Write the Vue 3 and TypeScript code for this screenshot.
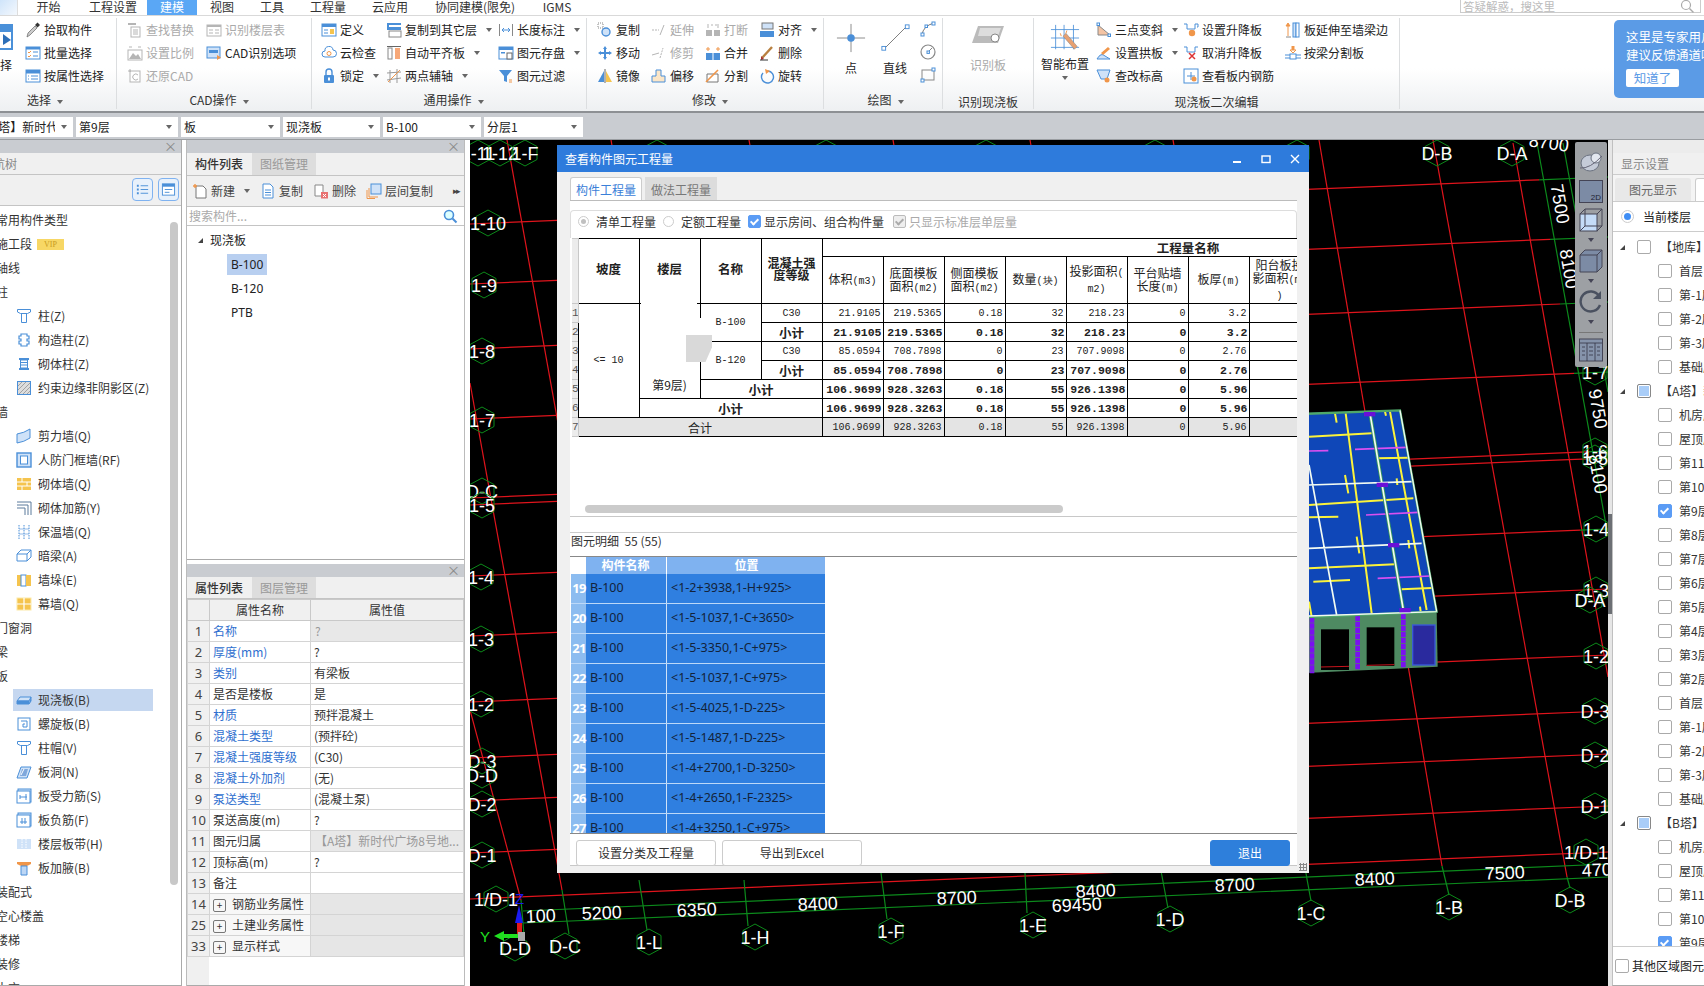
<template>
  <div class="app">
    <div class="topbar">
      <div class="logo"></div>
      <span v-for="t in tabs" :key="t.label" class="tab" :class="{ on: t.on }" :style="{ width: t.w + 'px' }">{{ t.label }}</span>
      <div class="ask">答疑解惑，搜这里<svg class="ic ask-ic" viewBox="0 0 16 16" v-html="icons.search"></svg></div>
    </div>

    <div class="ribbon">
      <div v-for="g in groups" :key="g.title" class="group" :style="{ width: g.w + 'px', paddingLeft: g.pad + 'px' }">
        <div class="g-body">
          <div v-if="g.title === '选择'" class="big-left">
            <svg viewBox="0 0 16 28" width="16" height="28"><rect x="-8" y="1" width="21" height="26" fill="#4a90d9"/><rect x="-6" y="9" width="17" height="16" fill="#fff"/><path d="M3 11v11l8-5z" fill="#2d6fb8"/></svg>
            <span>选择</span>
          </div>
          <div v-if="g.title === '绘图'" class="draw">
            <div class="big" style="width: 44px">
              <svg viewBox="0 0 32 32" width="32" height="30"><path d="M16 1v30M1 16h30" stroke="#888"/><circle cx="16" cy="16" r="4" fill="#4a8fd8"/></svg>
              <span>点</span>
            </div>
            <div class="big" style="width: 44px">
              <svg viewBox="0 0 32 32" width="32" height="30"><path d="M5 27L28 4" stroke="#777"/><rect x="2" y="25" width="4" height="4" fill="#fff" stroke="#4a8fd8"/><rect x="27" y="2" width="4" height="4" fill="#fff" stroke="#4a8fd8"/></svg>
              <span>直线</span>
            </div>
            <div class="draw-col">
              <svg class="ic" viewBox="0 0 16 16" v-html="icons.arc"></svg>
              <svg class="ic" viewBox="0 0 16 16" v-html="icons.circle"></svg>
              <svg class="ic" viewBox="0 0 16 16" v-html="icons.rect"></svg>
            </div>
          </div>
          <div v-if="g.title === '识别现浇板'" class="big off" style="width: 60px">
            <svg viewBox="0 0 36 28" width="36" height="28"><path d="M8 3h26l-6 17H2z" fill="#bbb"/><path d="M10 5h21l-3 8H8z" fill="#ddd"/><circle cx="25" cy="15" r="4" fill="#fff" stroke="#888"/></svg>
            <span>识别板</span>
          </div>
          <div v-if="g.title === '现浇板二次编辑'" class="big smart" style="width: 58px">
            <svg viewBox="0 0 32 32" width="32" height="30"><path d="M6 2v26M15 2v26M25 2v26M1 7h30M1 16h30M1 26h30" stroke="#4a8fd8" stroke-width=".9"/><path d="M14 14l3-3 12 14-3 3z" fill="#e8a070" stroke="#888" stroke-width=".6"/><path d="M11 11l1 3M18 8l-1 3" stroke="#f0964a"/></svg>
            <span>智能布置</span>
            <i class="arr"></i>
          </div>
          <div v-for="(c, ci) in g.cols" :key="ci" class="g-col" :style="{ width: c.w + 'px' }">
            <div v-for="it in c.items" :key="it.t" class="r-item" :class="{ off: it.off }">
              <svg class="ic" viewBox="0 0 16 16" v-html="icons[it.i]"></svg>
              <span>{{ it.t }}</span>
              <i v-if="it.a" class="arr"></i>
            </div>
          </div>
        </div>
        <div class="g-title" :class="{ low: !g.more, left: g.title === '选择' }">{{ g.title }}<i v-if="g.more" class="arr"></i></div>
      </div>
      <div class="notice">
        <p>这里是专家用户</p>
        <p>建议反馈通道哦</p>
        <b>知道了</b>
      </div>
    </div>

    <div class="combos">
      <div v-for="c in combos" :key="c.t" class="combo" :style="{ width: c.w + 'px' }">
        <span>{{ c.t }}</span><i class="arr"></i>
      </div>
    </div>

    <div class="main">
      <aside class="nav">
        <div class="head-bar"><span class="x">×</span></div>
        <div class="nav-title">导航树</div>
        <div class="nav-tools">
          <span class="view-btn"><svg viewBox="0 0 16 16" v-html="icons.viewList"></svg></span>
          <span class="view-btn"><svg viewBox="0 0 16 16" v-html="icons.viewCard"></svg></span>
        </div>
        <div class="nav-tree">
          <div v-for="n in navRows" :key="n.t" class="n-row" :class="{ sub: n.i, sel: n.sel }">
            <svg v-if="n.i" class="ic" viewBox="0 0 16 16" v-html="icons[n.i]"></svg>
            <span>{{ n.t }}</span>
            <em v-if="n.vip">VIP</em>
          </div>
          <div class="nav-scroll"></div>
        </div>
      </aside>

      <section class="mid">
        <div class="mid-top">
          <div class="head-bar"><span class="x">×</span></div>
          <div class="p-tabs"><span class="on">构件列表</span><span>图纸管理</span></div>
          <div class="mid-tools">
            <span v-for="t in midTools" :key="t.t" class="m-tool">
              <svg class="ic" viewBox="0 0 16 16" v-html="icons[t.i]"></svg>{{ t.t }}<i v-if="t.a" class="arr"></i>
            </span>
            <span class="more">▸▸</span>
          </div>
          <div class="m-search">搜索构件...<svg class="ic" viewBox="0 0 16 16" v-html="icons.searchBlue"></svg></div>
          <div class="m-tree">
            <div class="m-root"><i class="tri"></i>现浇板</div>
            <div class="m-leaf"><span class="sel">B-100</span></div>
            <div class="m-leaf"><span>B-120</span></div>
            <div class="m-leaf"><span>PTB</span></div>
          </div>
        </div>
        <div class="mid-bottom">
          <div class="head-bar"><span class="x">×</span></div>
          <div class="p-tabs"><span class="on">属性列表</span><span>图层管理</span></div>
          <table class="props">
            <colgroup><col style="width: 22px" /><col style="width: 101px" /><col style="width: 153px" /></colgroup>
            <thead>
              <tr><th></th><th>属性名称</th><th>属性值</th></tr>
            </thead>
            <tbody>
              <tr v-for="p in props" :key="p.n" :class="{ fold: p.plus }">
                <td class="idx">{{ p.n }}</td>
                <td class="pname" :class="{ link: p.link }"><i v-if="p.plus" class="plus">+</i>{{ p.name }}</td>
                <td class="pval" :class="{ dim: p.dim }">{{ p.val }}</td>
              </tr>
            </tbody>
          </table>
          <div class="props-rest"><span></span></div>
        </div>
      </section>

      <div class="canvas">
        <svg class="cad" viewBox="470 140 1138 846" width="1138" height="846">
          <g fill="none" stroke-width="1.2">
            <line v-for="(l, i) in redLines" :key="'r' + i" :x1="l[0]" :y1="l[1]" :x2="l[2]" :y2="l[3]" stroke="#e0141c" />
            <line v-for="(l, i) in greenLines" :key="'g' + i" :x1="l[0]" :y1="l[1]" :x2="l[2]" :y2="l[3]" stroke="#0c8a1c" />
          </g>
          <g v-for="h in hexes" :key="h.t + h.x" :transform="`translate(${h.x} ${h.y})`">
            <polygon points="0,-13 12,-6.5 12,6.5 0,13 -12,6.5 -12,-6.5" fill="none" stroke="#0c8a1a" />
            <text class="lbl" text-anchor="middle" y="6.5">{{ h.t }}</text>
          </g>
          <text v-for="d in dims" :key="d.t + d.x" class="lbl" text-anchor="middle" :transform="`translate(${d.x} ${d.y}) rotate(${d.r})`">{{ d.t }}</text>

          <g transform="translate(1200 380) scale(.33333)">
            <polygon points="300,100 600,90 710,695 300,712" fill="#0f47b8" />
            <polygon points="300,712 710,695 713,860 300,880" fill="#4e8a62" />
            <rect x="363" y="748" width="84" height="122" fill="#000" />
            <rect x="500" y="742" width="83" height="116" fill="#000" />
            <path d="M363 861l84-2M500 856l83-2" stroke="#c8141c" stroke-width="3" />
            <rect x="638" y="735" width="67" height="120" fill="#2a2a9e" stroke="#3a5ad8" stroke-width="4" />
            <path d="M336 712v168M473 708v160M610 702v160" stroke="#7a10f0" stroke-width="14" stroke-dasharray="16 2" />
            <g fill="none" stroke="#fbf33a" stroke-width="6">
              <path d="M327 170l188-10M327 375l313-20M327 565l258-12M530 235l95-2M605 628l90-4M340 605l110-5M327 412l88-2" />
              <path d="M437 100l78 600M570 95l110 595M405 100l5 28M555 95l3 12M435 285l10 55M590 295l2 20M470 470l8 50M625 480l3 25M660 680l2 15M327 665l8 45" />
            </g>
            <g fill="none" stroke="#d94ff0" stroke-width="5">
              <path d="M327 213l58-1M465 208l155-6M498 405l157-8M533 595l157-7" />
            </g>
            <g fill="none" stroke="#3a9a5a" stroke-width="10">
              <path d="M510 100l100 590" />
            </g>
            <g fill="none" stroke="#f2fbf2" stroke-width="5">
              <path d="M327 255l83 450M510 100l100 590M327 315l308-10M327 505l338-15" />
            </g>
            <path d="M300 102l300-11 110 604-410 17" fill="none" stroke="#4fa86a" stroke-width="7" />
            <path d="M600 91l110 604M327 708l383-13" fill="none" stroke="#f2fbf2" stroke-width="4" />
            <g fill="#6a10d8">
              <rect x="492" y="96" width="34" height="13" /><rect x="530" y="308" width="34" height="13" />
              <rect x="564" y="489" width="34" height="13" /><rect x="598" y="684" width="34" height="13" />
            </g>
          </g>

          <path d="M519 905l-4 18h8z" fill="#1a1af0" />
          <path d="M519 920v12" stroke="#1a1af0" stroke-width="3" />
          <rect x="517" y="923" width="5" height="12" fill="#e01818" />
          <rect x="518" y="932" width="7" height="9" fill="#aaa" />
          <path d="M518 936h-14" stroke="#20e020" stroke-width="4" />
          <path d="M494 936l10-5v10z" fill="#20e020" />
          <text x="480" y="942" class="ax" fill="#20e020">Y</text>
          <text x="515" y="904" class="ax" fill="#1a1af0">Z</text>
        </svg>

        <div class="tools3d">
          <svg viewBox="0 0 24 22" width="26" height="22"><ellipse cx="11" cy="12" rx="9" ry="8" fill="#c5cbd8" stroke="#6b7280" /><circle cx="17" cy="7" r="5" fill="#e3e7ef" stroke="#6b7280" /><path d="M1 17q10 1 22-12" stroke="#667" fill="none" /></svg>
          <div class="tool-2d">2D</div>
          <svg viewBox="0 0 24 24" width="24" height="24"><rect x="1" y="6" width="17" height="17" fill="#c4dcf8" stroke="#445" /><path d="M1 6l5-5h17v17l-5 5M18 6l5-5M6 1v17h17M6 18l-5 5" fill="none" stroke="#445" /></svg>
          <i class="tri3"></i>
          <svg viewBox="0 0 24 24" width="24" height="24"><path d="M1 6l5-5h17v17l-5 5H1z" fill="#7c8ba5" stroke="#445" /><path d="M1 6h17v17M18 6l5-5" fill="none" stroke="#445" /></svg>
          <i class="tri3"></i>
          <svg viewBox="0 0 24 24" width="24" height="24"><path d="M20 6a10 10 0 1 0 1 9" fill="none" stroke="#4a5160" stroke-width="2.4" /><path d="M22 1v8h-8z" fill="#4a5160" /></svg>
          <i class="tri3"></i>
          <hr />
          <svg viewBox="0 0 24 24" width="24" height="24"><rect x=".5" y="1" width="23" height="22" fill="#8593ab" stroke="#445" /><path d="M1 5h22M8 5v18M16 5v18M3 9h3M3 13h3M3 17h3M10 9h4M10 13h4M10 17h4M18 9h3M18 13h3M18 17h3" stroke="#334" stroke-width=".8" /></svg>
        </div>

        <div class="dlg">
          <div class="dlg-title">
            <span>查看构件图元工程量</span>
            <div class="win">
              <svg viewBox="0 0 10 10" width="10" height="10"><path d="M1 8h8" stroke="#fff" stroke-width="2" /></svg>
              <svg viewBox="0 0 10 10" width="10" height="10"><rect x="1" y="2" width="8" height="6.5" fill="none" stroke="#fff" stroke-width="1.4" /></svg>
              <svg viewBox="0 0 10 10" width="10" height="10"><path d="M1 1l8 8M9 1l-8 8" stroke="#fff" stroke-width="1.4" /></svg>
            </div>
          </div>
          <div class="dlg-tabs"><span class="on">构件工程量</span><span>做法工程量</span></div>
          <div class="pane">
            <div class="opts">
              <label><i class="radio on-grey"></i>清单工程量</label>
              <label><i class="radio"></i>定额工程量</label>
              <label class="chk-l"><i class="chk on"></i>显示房间、组合构件量</label>
              <label class="chk-l dis"><i class="chk grey"></i>只显示标准层单层量</label>
            </div>
            <div class="qty-wrap">
              <table class="qty">
                <colgroup>
                  <col style="width: 6px" />
                  <col v-for="n in 16" :key="n" style="width: 61px" />
                </colgroup>
                <thead>
                  <tr class="h1">
                    <th class="gut" rowspan="2"></th>
                    <th class="bold" rowspan="2">坡度</th>
                    <th class="bold" rowspan="2">楼层</th>
                    <th class="bold" rowspan="2">名称</th>
                    <th class="bold tight" rowspan="2">混凝土强度等级</th>
                    <th class="bold wide" colspan="12">工程量名称</th>
                  </tr>
                  <tr class="h2">
                    <th>体积<small>(m3)</small></th>
                    <th>底面模板<br />面积<small>(m2)</small></th>
                    <th>侧面模板<br />面积<small>(m2)</small></th>
                    <th>数量<small>(块)</small></th>
                    <th>投影面积<small>(</small><br /><small>m2)</small></th>
                    <th>平台贴墙<br />长度<small>(m)</small></th>
                    <th>板厚<small>(m)</small></th>
                    <th>阳台板投<br />影面积<small>(m2</small><br /><small>)</small></th>
                    <th v-for="n in 4" :key="n"></th>
                  </tr>
                </thead>
                <tbody>
                  <tr v-for="(r, i) in qtyRows" :key="i" :class="{ sum: r.bold, total: r.total }">
                    <td class="gut">{{ i + 1 }}</td>
                    <td v-for="c in r.lead" :key="c.t" :rowspan="c.rs || 1" :colspan="c.cs || 1" class="lead" :class="c.c">{{ c.t }}</td>
                    <td v-for="(v, k) in r.vals" :key="k" class="num">{{ v }}</td>
                    <td v-for="n in 4" :key="'x' + n"></td>
                  </tr>
                </tbody>
              </table>
              <div class="mask">
                <span class="mask-a"></span><span class="mask-b"></span><span class="mask-c"></span>
              </div>
              <div class="h-scroll"></div>
            </div>
            <div class="detail-head">图元明细&nbsp;&nbsp;55 (55)</div>
            <div class="detail">
              <div class="d-head"><span class="d-g"></span><span class="d-n">构件名称</span><span class="d-p">位置</span></div>
              <div v-for="d in details" :key="d.n" class="d-row">
                <span class="d-g">{{ d.n }}</span><span class="d-n">B-100</span><span class="d-p">{{ d.p }}</span>
              </div>
            </div>
            <div class="actions">
              <button>设置分类及工程量</button>
              <button>导出到Excel</button>
              <button class="quit">退出</button>
            </div>
          </div>
          <span class="grip"></span>
        </div>
      </div>

      <div class="split"><span></span></div>

      <aside class="right">
        <div class="r-head"></div>
        <div class="r-title">显示设置</div>
        <div class="r-tabs"><span>图元显示</span><span class="on">楼层显示</span></div>
        <div class="r-cur"><i class="radio sel"></i>当前楼层</div>
        <div class="r-tree">
          <div v-for="(f, i) in floors" :key="i" class="f-row" :class="{ top: f.top }">
            <i v-if="f.top" class="tri"></i>
            <i class="chk" :class="{ on: f.on, part: f.part }"></i>
            <span>{{ f.t }}</span>
          </div>
        </div>
        <div class="r-foot"><i class="chk"></i><span>其他区域图元不显示</span></div>
      </aside>
    </div>
  </div>
</template>

<script setup lang="ts">
interface RItem { t: string; i: string; a?: boolean; off?: boolean }

const B = '#4a8fd8'
const L = '#cfe2f8'
const G = '#b5b5b5'
const O = '#f0964a'
const Y = '#f5c44e'
const K = '#666'

const icons: Record<string, string> = {
  search: `<circle cx="7" cy="7" r="4.5" fill="none" stroke="#aaa" stroke-width="1.2"/><path d="M10.5 10.5l4 4" stroke="#aaa" stroke-width="1.5"/>`,
  searchBlue: `<circle cx="7" cy="7" r="4.5" fill="#dff" stroke="${B}" stroke-width="1.6"/><path d="M10.5 10.5l4 4" stroke="${B}" stroke-width="2"/>`,
  pick: `<path d="M2 15l1-4 7-7 2 2-7 7z" fill="#ccc" stroke="${K}" stroke-width=".7"/><path d="M10 3l2.5-2.5L15 3l-2.5 2.5z" fill="#333"/>`,
  batch: `<rect x="1" y="2" width="14" height="12" fill="#fff" stroke="${B}"/><rect x="1" y="2" width="14" height="2.5" fill="${B}"/><path d="M3 7l1 1 2-2M3 11l1 1 2-2" stroke="${O}" fill="none"/><path d="M8 7h5M8 11h5" stroke="${B}"/>`,
  byattr: `<rect x="1" y="2" width="14" height="12" fill="#fff" stroke="${B}"/><rect x="1" y="2" width="14" height="3.5" fill="${B}"/><path d="M3 8h1M3 11h1M6 8h7M6 11h7" stroke="${B}"/>`,
  find: `<rect x="1" y="1" width="8" height="2" fill="${G}"/><rect x="4" y="5" width="9" height="10" fill="#fff" stroke="${G}"/><path d="M6 8h5M6 10h5M6 12h5" stroke="${G}"/>`,
  floortbl: `<rect x="1" y="3" width="14" height="11" fill="#fff" stroke="${G}"/><rect x="1" y="3" width="14" height="2" fill="${G}"/><path d="M3 8h4M3 11h4M9 8h4M9 11h4" stroke="${G}"/>`,
  scale: `<path d="M2 14l4-6 3 3 2-2 3 5z" fill="${G}"/><rect x="1" y="5" width="14" height="10" fill="none" stroke="${G}"/><path d="M2 2h3M11 2h3" stroke="${G}"/>`,
  restore: `<rect x="3" y="3" width="10" height="11" fill="#fff" stroke="${G}"/><path d="M11 7a3 3 0 1 0 0 4" fill="none" stroke="${G}"/><path d="M1 3h3M3 1v3" stroke="${G}"/>`,
  cadopt: `<rect x="1" y="2" width="13" height="11" fill="${L}" stroke="${B}"/><rect x="3" y="5" width="9" height="3" fill="${B}"/><path d="M11 10l4 2.5-4 2.5z" fill="${O}"/>`,
  define: `<rect x="1" y="2" width="14" height="12" fill="#fff" stroke="${B}"/><rect x="1" y="2" width="14" height="3" fill="${B}"/><rect x="9" y="7" width="4" height="5" fill="${Y}"/><path d="M3 8h4M3 11h4" stroke="${B}"/>`,
  cloud: `<path d="M4 12a3 3 0 0 1 0-6 4 4 0 0 1 8-1 3.5 3.5 0 0 1 0 7z" fill="#fff" stroke="${B}"/><circle cx="8" cy="8.5" r="2" fill="none" stroke="${O}"/>`,
  lock: `<rect x="3" y="7" width="10" height="8" rx="1" fill="${B}"/><path d="M5 7V4a3 3 0 0 1 6 0v3" fill="none" stroke="${B}" stroke-width="1.4"/><rect x="7" y="9.5" width="2" height="3" fill="#fff"/>`,
  copylayer: `<rect x="1" y="1" width="14" height="7" fill="${B}"/><rect x="3" y="3" width="12" height="2" fill="#fff"/><rect x="3" y="9" width="12" height="6" fill="#fff" stroke="#888"/>`,
  autoalign: `<rect x="2" y="3" width="4" height="11" fill="#fff" stroke="#888"/><rect x="9" y="3" width="5" height="11" fill="#f7a878"/><path d="M1 1.5h14" stroke="#666"/>`,
  twoaxis: `<path d="M4 2v13M11 1v14M1 5l14-1M1 12l14-2" stroke="#999"/><path d="M2 14L14 2" stroke="${O}"/>`,
  length: `<path d="M1.5 2v12M14.5 2v12" stroke="#888"/><path d="M4 8h8M4 8l2-2M4 8l2 2M12 8l-2-2M12 8l-2 2" stroke="${B}" fill="none"/>`,
  save: `<rect x="1" y="2" width="14" height="12" fill="#fff" stroke="${B}"/><rect x="1" y="2" width="14" height="3" fill="${B}"/><rect x="3" y="7" width="4" height="1.5" fill="${B}"/><rect x="9" y="8" width="5" height="6" fill="#fff" stroke="#666"/>`,
  filter: `<path d="M1 2h13L9 8v6l-3-1V8z" fill="${B}"/><path d="M11 12h3M11 14h3" stroke="${O}"/>`,
  copy: `<rect x="1" y="1" width="5" height="5" fill="none" stroke="#888" stroke-dasharray="1 1"/><circle cx="9" cy="10" r="4" fill="${L}" stroke="${B}" stroke-width="1.4"/>`,
  move: `<path d="M8 1l2 3H9v3h3V6l3 2-3 2V9H9v3h1l-2 3-2-3h1V9H4v1L1 8l3-2v1h3V4H6z" fill="${B}"/>`,
  mirror: `<path d="M7 3v11H1z" fill="${B}"/><path d="M9 3v11h6z" fill="${Y}"/><path d="M8 1v14" stroke="#666"/>`,
  extend: `<path d="M1 8h7" stroke="${G}" stroke-dasharray="2 1"/><path d="M9 13l4-10" stroke="${G}"/>`,
  trim: `<path d="M1 10l7-2" stroke="${G}"/><path d="M9 13l3-10" stroke="${G}" stroke-dasharray="2 1"/>`,
  offset: `<path d="M5 2h5v6h4v6H1V8h4z" fill="#fbe6c8" stroke="${B}"/>`,
  break: `<rect x="1" y="8" width="6" height="6" fill="${G}"/><rect x="9" y="8" width="6" height="6" fill="${G}"/><path d="M3 2v4M13 2v4M8 3h-2M10 3h2" stroke="${G}"/>`,
  merge: `<rect x="1" y="8" width="14" height="7" fill="${B}"/><path d="M8 8v7" stroke="#fff"/><path d="M3 2v4M1 4h4M13 2v4M11 4h4" stroke="${O}"/>`,
  split: `<path d="M2 6h11v8H2z" fill="#fff" stroke="#777"/><path d="M1 14L13 2" stroke="${O}" stroke-width="1.6"/>`,
  align: `<rect x="3" y="1" width="11" height="6" fill="#cfe2f8" stroke="#777"/><rect x="1" y="9" width="14" height="6" fill="${B}"/>`,
  del: `<path d="M3 13L13 2" stroke="#b88040" stroke-width="2.4"/><path d="M2 11l3 3-3 1z" fill="#a33"/><path d="M1 15h8" stroke="#333"/>`,
  rotate: `<path d="M4 5a6 6 0 1 0 5-2" fill="none" stroke="${B}" stroke-width="1.4"/><path d="M6 1l5 2-4 3z" fill="${O}"/>`,
  arc: `<path d="M2 14q1-9 12-12" fill="none" stroke="#777"/><rect x="1" y="12" width="3" height="3" fill="#fff" stroke="${B}"/><rect x="12" y="1" width="3" height="3" fill="#fff" stroke="${B}"/><rect x="5" y="4" width="2.5" height="2.5" fill="#fff" stroke="${B}"/>`,
  circle: `<circle cx="8" cy="8" r="7" fill="none" stroke="#888" stroke-width="1.2"/><path d="M8 8l4-4" stroke="#888"/><rect x="7" y="7" width="2.4" height="2.4" fill="#fff" stroke="${B}"/>`,
  rect: `<rect x="2" y="3" width="12" height="10" fill="none" stroke="#888"/><rect x="1" y="12" width="3" height="3" fill="#fff" stroke="${B}"/><rect x="12" y="1" width="3" height="3" fill="#fff" stroke="${B}"/>`,
  slope: `<path d="M2 3l12 10H2z" fill="#f4c4a4" stroke="#888"/><rect x="1" y="1" width="2.5" height="2.5" fill="#fff" stroke="${B}"/><rect x="12" y="12" width="2.5" height="2.5" fill="#fff" stroke="${B}"/>`,
  arch: `<path d="M1 14q4-7 8-3l5 3z" fill="${L}" stroke="${B}"/><path d="M5 8l7-6 2 2-7 6z" fill="${O}"/>`,
  height: `<path d="M1 2h13l-3 9H5z" fill="${L}" stroke="${B}"/><circle cx="11" cy="12" r="2.5" fill="${O}"/>`,
  raise: `<path d="M1 2h3v5h8V2h3v3h-1M5 7" fill="none" stroke="${B}"/><circle cx="9" cy="11" r="3.2" fill="${O}"/>`,
  unraise: `<path d="M1 2h3v5h8V2h3" fill="none" stroke="${B}"/><path d="M6 8l6 6M12 8l-6 6" stroke="#d33" stroke-width="1.5"/>`,
  inner: `<rect x="1" y="1" width="14" height="14" fill="#fff" stroke="${B}"/><path d="M4 8h8M8 4v8" stroke="${B}"/><circle cx="11" cy="11" r="2.5" fill="${O}"/>`,
  extendWall: `<path d="M3 14V4M3 1l-2 3h4z" stroke="${O}" fill="${O}"/><path d="M1 15h5" stroke="#888"/><rect x="8" y="1" width="3" height="14" fill="${L}" stroke="${B}"/><rect x="11" y="1" width="3" height="14" fill="#fff" stroke="${B}"/>`,
  beamSplit: `<path d="M8 1v4" stroke="${O}" stroke-width="3"/><path d="M5 5h6L8 8z" fill="#fff" stroke="${O}"/><rect x="5" y="9" width="6" height="5" fill="#fff" stroke="${B}"/><path d="M0 10h5M0 13h5M11 10h5M11 13h5" stroke="${B}"/>`,
  viewList: `<path d="M2 3h2v2H2zM2 7h2v2H2zM2 11h2v2H2z" fill="${B}"/><path d="M6 4h8M6 8h8M6 12h8" stroke="${B}"/>`,
  viewCard: `<rect x="1.5" y="2" width="13" height="12" fill="#fff" stroke="${B}"/><rect x="1.5" y="2" width="13" height="3" fill="${B}"/><path d="M4 8h8M4 11h5" stroke="${B}"/>`,
  mNew: `<path d="M4 3h7l3 3v9H4z" fill="#fff" stroke="#777"/><path d="M3 1v4M1 3h4" stroke="${O}" stroke-width="1.4"/>`,
  mCopy: `<path d="M3 1h7l3 3v11H3z" fill="#fff" stroke="${B}"/><path d="M5 7h6M5 9.5h6M5 12h6" stroke="${B}"/>`,
  mDel: `<path d="M2 2h8v11H2z" fill="#fff" stroke="#888"/><rect x="8" y="9" width="7" height="6.5" fill="#e87070"/><path d="M10 11l3 3M13 11l-3 3" stroke="#fff"/>`,
  mLayer: `<rect x="5" y="1" width="10" height="10" fill="${L}" stroke="${B}"/><path d="M3 5v9h9M1 7v8.5h8" fill="none" stroke="${O}"/>`,
  col: `<path d="M1.5 1.5h13v2.5l-3 1.5h-7l-3-1.5zM5.5 5.5h5v9h-5z" fill="#fff" stroke="${B}"/>`,
  gzz: `<path d="M5 2h6v2h2v3h-2v2h2v3h-2v2H5v-2H3V9h2V7H3V4h2z" fill="#fff" stroke="${B}" stroke-width="1.2"/>`,
  qtz: `<rect x="3" y="2" width="10" height="2" fill="${B}"/><rect x="4.5" y="4" width="7" height="8" fill="#fff" stroke="${B}"/><path d="M4.5 6.5h7M4.5 9h7" stroke="${B}"/><rect x="3" y="12" width="10" height="2" fill="${B}"/>`,
  edge: `<rect x="1.5" y="1.5" width="13" height="13" fill="#ddd" stroke="${B}"/><path d="M2 6l4-4M2 10l8-8M3 14L14 3M7 14l7-7M11 14l3-3" stroke="#888" stroke-width=".7"/>`,
  shear: `<path d="M1 6q7-1 13-5v9q-6 4-13 5z" fill="${L}" stroke="${B}"/>`,
  rf: `<rect x="1" y="1" width="14" height="14" fill="${L}" stroke="${B}" stroke-width="1.4"/><rect x="4.5" y="4" width="7" height="8" fill="#fff" stroke="${B}"/>`,
  brick: `<rect x="1" y="2" width="14" height="12" fill="${Y}"/><path d="M1 6h14M1 10h14M6 2v4M11 6v4M6 10v4" stroke="#fff"/>`,
  addbar: `<path d="M1 2h14v13M1 5h11v10M1 8h8v7" fill="none" stroke="#5b7a9c"/>`,
  insul: `<path d="M3 1v14M13 1v14M8 1v14" stroke="${B}" stroke-dasharray="1.5 1"/><path d="M3 5h10M3 10h10" stroke="${B}" stroke-width=".6"/>`,
  beam: `<path d="M1 6l4-4h10v7l-4 4H1z" fill="#fff" stroke="${B}"/><path d="M1 6h10v7M11 6l4-4" fill="none" stroke="${B}"/>`,
  duo: `<rect x="1" y="3" width="4" height="11" fill="${Y}"/><rect x="5" y="3" width="5" height="11" fill="#fff" stroke="${B}"/><rect x="10" y="3" width="5" height="11" fill="${Y}"/>`,
  curtain: `<rect x="1" y="2" width="14" height="12" fill="${Y}" stroke="#fce9a8"/><path d="M8 2v12M1 8h14" stroke="#fff" stroke-width="1.2"/>`,
  slab: `<path d="M1 9l3-4h11l-2 4z" fill="${L}" stroke="${B}"/><path d="M1 9h12v3H1zM13 12l2-3V5" fill="${B}" stroke="${B}"/>`,
  spiral: `<rect x="2" y="2" width="12" height="12" fill="#fff" stroke="${B}"/><path d="M5 5h6v6H7V8h2" fill="none" stroke="${B}"/>`,
  hole: `<path d="M1 14L5 3h10l-4 11z" fill="${L}" stroke="${B}"/><path d="M4 12l2-7h6l-2 7z" fill="#7fa8dc"/><path d="M5 11l3-6" stroke="#fff"/>`,
  rebar: `<rect x="2" y="1" width="13" height="13" fill="${L}" stroke="${B}"/><rect x="1" y="3" width="13" height="12" fill="#fff" stroke="${B}"/><path d="M4 9h7M10 6v6M4 7v4" stroke="${B}"/>`,
  rebarNeg: `<rect x="2" y="1" width="13" height="13" fill="${L}" stroke="${B}"/><rect x="1" y="3" width="13" height="12" fill="#fff" stroke="${B}"/><path d="M4 10h7M6 6v6M9 6v6" stroke="${B}"/>`,
  band: `<rect x="1" y="3" width="14" height="10" fill="${L}"/><path d="M6 3v10M10 3v10" stroke="#fff" stroke-dasharray="1.5 1"/>`,
  haunch: `<path d="M1 2h14v2l-4 2H5L1 4z" fill="${O}"/><path d="M5 6h6v9H5z" fill="#bcd6f5" stroke="${B}"/>`
}

const tabs = [
  { label: '开始', w: 61 },
  { label: '工程设置', w: 68 },
  { label: '建模', w: 50, on: true },
  { label: '视图', w: 50 },
  { label: '工具', w: 50 },
  { label: '工程量', w: 62 },
  { label: '云应用', w: 62 },
  { label: '协同建模(限免)', w: 108 },
  { label: 'IGMS', w: 56 }
]

const groups: { title: string; w: number; pad: number; more?: boolean; cols: { w: number; items: RItem[] }[] }[] = [
  {
    title: '选择', w: 117, pad: 0, more: true,
    cols: [{ w: 90, items: [{ t: '拾取构件', i: 'pick' }, { t: '批量选择', i: 'batch' }, { t: '按属性选择', i: 'byattr' }] }]
  },
  {
    title: 'CAD操作', w: 195, pad: 10, more: true,
    cols: [
      { w: 79, items: [{ t: '查找替换', i: 'find', off: true }, { t: '设置比例', i: 'scale', off: true }, { t: '还原CAD', i: 'restore', off: true }] },
      { w: 100, items: [{ t: '识别楼层表', i: 'floortbl', off: true }, { t: 'CAD识别选项', i: 'cadopt' }] }
    ]
  },
  {
    title: '通用操作', w: 275, pad: 9, more: true,
    cols: [
      { w: 65, items: [{ t: '定义', i: 'define' }, { t: '云检查', i: 'cloud' }, { t: '锁定', i: 'lock', a: true }] },
      { w: 112, items: [{ t: '复制到其它层', i: 'copylayer', a: true }, { t: '自动平齐板', i: 'autoalign', a: true }, { t: '两点辅轴', i: 'twoaxis', a: true }] },
      { w: 86, items: [{ t: '长度标注', i: 'length', a: true }, { t: '图元存盘', i: 'save', a: true }, { t: '图元过滤', i: 'filter' }] }
    ]
  },
  {
    title: '修改', w: 237, pad: 10, more: true,
    cols: [
      { w: 54, items: [{ t: '复制', i: 'copy' }, { t: '移动', i: 'move' }, { t: '镜像', i: 'mirror' }] },
      { w: 54, items: [{ t: '延伸', i: 'extend', off: true }, { t: '修剪', i: 'trim', off: true }, { t: '偏移', i: 'offset' }] },
      { w: 54, items: [{ t: '打断', i: 'break', off: true }, { t: '合并', i: 'merge' }, { t: '分割', i: 'split' }] },
      { w: 60, items: [{ t: '对齐', i: 'align', a: true }, { t: '删除', i: 'del' }, { t: '旋转', i: 'rotate' }] }
    ]
  },
  { title: '绘图', w: 119, pad: 5, more: true, cols: [] },
  { title: '识别现浇板', w: 91, pad: 0, cols: [] },
  {
    title: '现浇板二次编辑', w: 366, pad: 0,
    cols: [
      { w: 87, items: [{ t: '三点变斜', i: 'slope', a: true }, { t: '设置拱板', i: 'arch', a: true }, { t: '查改标高', i: 'height' }] },
      { w: 102, items: [{ t: '设置升降板', i: 'raise' }, { t: '取消升降板', i: 'unraise' }, { t: '查看板内钢筋', i: 'inner' }] },
      { w: 110, items: [{ t: '板延伸至墙梁边', i: 'extendWall' }, { t: '按梁分割板', i: 'beamSplit' }] }
    ]
  }
]

const combos = [
  { t: '【A塔】新时代广场', w: 73 },
  { t: '第9层', w: 102 },
  { t: '板', w: 99 },
  { t: '现浇板', w: 97 },
  { t: 'B-100', w: 98 },
  { t: '分层1', w: 99 }
]

const navRows: { t: string; i?: string; vip?: boolean; sel?: boolean }[] = [
  { t: '常用构件类型' }, { t: '施工段', vip: true }, { t: '轴线' }, { t: '柱' },
  { t: '柱(Z)', i: 'col' }, { t: '构造柱(Z)', i: 'gzz' }, { t: '砌体柱(Z)', i: 'qtz' }, { t: '约束边缘非阴影区(Z)', i: 'edge' },
  { t: '墙' },
  { t: '剪力墙(Q)', i: 'shear' }, { t: '人防门框墙(RF)', i: 'rf' }, { t: '砌体墙(Q)', i: 'brick' }, { t: '砌体加筋(Y)', i: 'addbar' },
  { t: '保温墙(Q)', i: 'insul' }, { t: '暗梁(A)', i: 'beam' }, { t: '墙垛(E)', i: 'duo' }, { t: '幕墙(Q)', i: 'curtain' },
  { t: '门窗洞' }, { t: '梁' }, { t: '板' },
  { t: '现浇板(B)', i: 'slab', sel: true }, { t: '螺旋板(B)', i: 'spiral' }, { t: '柱帽(V)', i: 'col' }, { t: '板洞(N)', i: 'hole' },
  { t: '板受力筋(S)', i: 'rebar' }, { t: '板负筋(F)', i: 'rebarNeg' }, { t: '楼层板带(H)', i: 'band' }, { t: '板加腋(B)', i: 'haunch' },
  { t: '装配式' }, { t: '空心楼盖' }, { t: '楼梯' }, { t: '装修' }, { t: '土方' }
]

const midTools = [
  { t: '新建', i: 'mNew', a: true },
  { t: '复制', i: 'mCopy' },
  { t: '删除', i: 'mDel' },
  { t: '层间复制', i: 'mLayer' }
]

const props: { n: number; name: string; val?: string; link?: boolean; dim?: boolean; plus?: boolean }[] = [
  { n: 1, name: '名称', val: '?', link: true, dim: true },
  { n: 2, name: '厚度(mm)', val: '?', link: true },
  { n: 3, name: '类别', val: '有梁板', link: true },
  { n: 4, name: '是否是楼板', val: '是' },
  { n: 5, name: '材质', val: '预拌混凝土', link: true },
  { n: 6, name: '混凝土类型', val: '(预拌砼)', link: true },
  { n: 7, name: '混凝土强度等级', val: '(C30)', link: true },
  { n: 8, name: '混凝土外加剂', val: '(无)', link: true },
  { n: 9, name: '泵送类型', val: '(混凝土泵)', link: true },
  { n: 10, name: '泵送高度(m)', val: '?' },
  { n: 11, name: '图元归属', val: '【A塔】新时代广场8号地...', dim: true },
  { n: 12, name: '顶标高(m)', val: '?' },
  { n: 13, name: '备注' },
  { n: 14, name: '钢筋业务属性', plus: true },
  { n: 25, name: '土建业务属性', plus: true },
  { n: 33, name: '显示样式', plus: true }
]

const r1 = ['21.9105', '219.5365', '0.18', '32', '218.23', '0', '3.2', '']
const r3 = ['85.0594', '708.7898', '0', '23', '707.9098', '0', '2.76', '']
const r5 = ['106.9699', '928.3263', '0.18', '55', '926.1398', '0', '5.96', '']

const qtyRows: { lead: { t: string; rs?: number; cs?: number; c?: string }[]; vals: string[]; bold?: boolean; total?: boolean }[] = [
  { lead: [{ t: '<= 10', rs: 6 }, { t: '第9层)', rs: 5, c: 'floor' }, { t: 'B-100', rs: 2 }, { t: 'C30' }], vals: r1 },
  { lead: [{ t: '小计', c: 'hz' }], vals: r1, bold: true },
  { lead: [{ t: 'B-120', rs: 2 }, { t: 'C30' }], vals: r3 },
  { lead: [{ t: '小计', c: 'hz' }], vals: r3, bold: true },
  { lead: [{ t: '小计', cs: 2, c: 'hz' }], vals: r5, bold: true },
  { lead: [{ t: '小计', cs: 3, c: 'hz' }], vals: r5, bold: true },
  { lead: [{ t: '合计', cs: 4, c: 'plain' }], vals: r5, total: true }
]

const details = [
  { n: 19, p: '<1-2+3938,1-H+925>' },
  { n: 20, p: '<1-5-1037,1-C+3650>' },
  { n: 21, p: '<1-5-3350,1-C+975>' },
  { n: 22, p: '<1-5-1037,1-C+975>' },
  { n: 23, p: '<1-5-4025,1-D-225>' },
  { n: 24, p: '<1-5-1487,1-D-225>' },
  { n: 25, p: '<1-4+2700,1-D-3250>' },
  { n: 26, p: '<1-4+2650,1-F-2325>' },
  { n: 27, p: '<1-4+3250,1-C+975>' }
]

const lowFloors = ['首层', '第-1层', '第-2层', '第-3层', '基础层']
const tower = (name: string, part: boolean) => [
  { t: name, top: true, part },
  ...['机房层', '屋顶层', '第11层', '第10层'].map((t) => ({ t })),
  { t: '第9层', on: true },
  ...['第8层', '第7层', '第6层', '第5层', '第4层', '第3层', '第2层'].map((t) => ({ t })),
  ...lowFloors.map((t) => ({ t }))
]
const floors: { t: string; top?: boolean; part?: boolean; on?: boolean }[] = [
  { t: '【地库】新时代广场', top: true },
  ...lowFloors.map((t) => ({ t })),
  ...tower('【A塔】新时代广场', true),
  ...tower('【B塔】新时代广场', true)
]

// CAD grid, in page coordinates (the svg viewBox starts at the canvas corner)
const rowY = [177, 237, 302, 372, 451, 458, 529, 589, 655, 711, 754, 806, 852]
const rowAt = (y: number, x: number) => y + (1608 - x) * 0.0413
const redEnd = [1539, 1550, 1560, 1574, 1587, 1588, 1580, 1608, 1608, 1608, 1608, 1608, 1608]
const redLines: number[][] = [
  ...rowY.map((y, i) => [470, rowAt(y, 470), redEnd[i], rowAt(y, redEnd[i])]),
  [507, 140, 639, 873], [611, 140, 744, 873], [749, 140, 881, 873], [893, 140, 1025, 873],
  [1030, 140, 1161, 871], [1173, 140, 1305, 868], [1319, 140, 1442, 866],
  [1433, 140, 1567, 877], [1513, 143, 1608, 677], [470, 383, 562, 890], [470, 710, 521, 900]
]
const greenLines: number[][] = [
  ...rowY.slice(0, 7).map((y, i) => [redEnd[i], rowAt(y, redEnd[i]), 1608, rowAt(y, 1608)]),
  [1537, 143, 1608, 536], [1563, 143, 1608, 392],
  [523, 911, 1608, 864], [523, 923, 1608, 877],
  [639, 880, 647, 930], [744, 880, 748, 926], [881, 873, 887, 919], [1025, 873, 1027, 913],
  [1161, 871, 1168, 908], [1305, 868, 1311, 901], [1442, 866, 1449, 895], [562, 890, 569, 934], [521, 900, 524, 935], [1567, 877, 1570, 888]
]
const hexes = [
  ...[[657, 153], [826, 153], [986, 153], [1155, 153], [1297, 153]].map(([x, y]) => ({ t: '', x, y })),
  { t: '1-11', x: 478, y: 153 }, { t: '1-12', x: 500, y: 153 }, { t: '1-F', x: 525, y: 153 },
  { t: 'D-B', x: 1437, y: 153 }, { t: 'D-A', x: 1512, y: 153 },
  { t: '1-10', x: 488, y: 223 }, { t: '1-9', x: 484, y: 285 }, { t: '1-8', x: 482, y: 351 }, { t: '1-7', x: 482, y: 420 },
  { t: 'D-C', x: 482, y: 491 }, { t: '1-5', x: 482, y: 505 }, { t: '1-4', x: 481, y: 577 }, { t: '1-3', x: 481, y: 639 },
  { t: '1-2', x: 481, y: 704 }, { t: 'D-3', x: 482, y: 761 }, { t: 'D-D', x: 482, y: 775 }, { t: 'D-2', x: 482, y: 804 },
  { t: 'D-1', x: 482, y: 855 }, { t: '1/D-1', x: 496, y: 899 },
  { t: '1-7', x: 1595, y: 372 }, { t: '1-6', x: 1595, y: 451 }, { t: '1-5', x: 1595, y: 458 }, { t: '1-4', x: 1596, y: 529 },
  { t: '1-3', x: 1596, y: 590 }, { t: 'D-A', x: 1590, y: 600 }, { t: '1-2', x: 1596, y: 656 },
  { t: 'D-3', x: 1595, y: 711 }, { t: 'D-2', x: 1595, y: 755 }, { t: 'D-1', x: 1595, y: 806 }, { t: '1/D-1', x: 1586, y: 852 },
  { t: 'D-D', x: 515, y: 948 }, { t: 'D-C', x: 565, y: 946 }, { t: '1-L', x: 649, y: 942 }, { t: '1-H', x: 755, y: 937 },
  { t: '1-F', x: 891, y: 931 }, { t: '1-E', x: 1033, y: 925 }, { t: '1-D', x: 1170, y: 919 }, { t: '1-C', x: 1311, y: 913 },
  { t: '1-B', x: 1449, y: 907 }, { t: 'D-B', x: 1570, y: 900 }
]
const dims = [
  { t: '100', x: 541, y: 922, r: -2.5 }, { t: '5200', x: 602, y: 919, r: -2.5 }, { t: '6350', x: 697, y: 916, r: -2.5 },
  { t: '8400', x: 818, y: 910, r: -2.5 }, { t: '8700', x: 957, y: 904, r: -2.5 }, { t: '8400', x: 1096, y: 897, r: -2.5 },
  { t: '69450', x: 1077, y: 911, r: -2.5 }, { t: '8700', x: 1235, y: 891, r: -2.5 }, { t: '8400', x: 1375, y: 885, r: -2.5 },
  { t: '7500', x: 1505, y: 879, r: -2.5 }, { t: '470', x: 1597, y: 876, r: -2.5 },
  { t: '8700', x: 1548, y: 149, r: 8 }, { t: '7500', x: 1554, y: 205, r: 80 }, { t: '8100', x: 1563, y: 270, r: 80 },
  { t: '9750', x: 1592, y: 410, r: 80 }, { t: '8100', x: 1592, y: 475, r: 80 }
]
</script>

<style scoped>
.app {
  width: 1704px;
  height: 986px;
  overflow: hidden;
  display: flex;
  flex-direction: column;
  background: #fff;
  color: #222;
  font-family: "Noto Sans CJK SC", "Noto Sans", sans-serif;
  font-size: 12px;
  line-height: 16px;
}
.ic { width: 16px; height: 16px; flex: none; }
.arr {
  display: inline-block;
  width: 0;
  height: 0;
  margin-left: 6px;
  border-left: 3px solid transparent;
  border-right: 3px solid transparent;
  border-top: 4px solid #666;
  flex: none;
  vertical-align: middle;
}
.x { color: #888; font-size: 13px; line-height: 12px; }

/* top strip */
.topbar { height: 16px; display: flex; border-bottom: 1px solid #d9d9d9; box-sizing: border-box; position: relative; }
.logo { width: 17px; background: linear-gradient(135deg, #cfe4fa, #f4f8fd); border-right: 1px solid #ddd; margin-right: 0; flex: none; }
.tab { text-align: center; line-height: 13px; color: #333; flex: none; }
.tab.on { background: #5aa7f5; color: #fff; }
.ask {
  position: absolute;
  left: 1460px;
  top: -1px;
  width: 241px;
  height: 14px;
  border: 1px solid #ccc;
  color: #bbb;
  line-height: 13px;
  padding-left: 2px;
  font-size: 11.5px;
  box-sizing: border-box;
}
.ask-ic { position: absolute; right: 5px; top: -2px; }

/* ribbon */
.ribbon {
  height: 97px;
  flex: none;
  display: flex;
  position: relative;
  background: linear-gradient(#fff 0, #fff 55%, #eef0f2 100%);
  border-bottom: 2px solid #8d9094;
  box-sizing: border-box;
}
.group {
  box-sizing: border-box;
  border-right: 1px solid #dcdee0;
  margin: 2px 0 2px;
  display: flex;
  flex-direction: column;
  flex: none;
}
.group:first-child { padding-left: 0; }
.g-body { height: 72px; display: flex; flex: none; }
.g-col { flex: none; }
.r-item { height: 23px; display: flex; align-items: center; gap: 3px; white-space: nowrap; }
.r-item.off { color: #aaa; }
.g-title { text-align: center; line-height: 20px; color: #333; flex: none; }
.g-title.low { padding-top: 2px; }
.g-title.left { padding-right: 26px; }
.big-left { width: 25px; flex: none; overflow: hidden; padding-top: 5px; position: relative; }
.big-left svg { display: block; }
.big-left span { display: block; margin: 6px 0 0 -12px; }
.big { display: flex; flex-direction: column; align-items: center; padding-top: 5px; flex: none; }
.big span { margin-top: 7px; white-space: nowrap; }
.big.off { color: #aaa; margin: 0 auto; }
.big.off span { margin-top: 6px; }
.smart { margin: 0 2px 0 2px; }
.smart span { margin-top: 3px; }
.smart .arr { margin: 4px 0 0; }
.draw { display: flex; }
.draw-col { display: flex; flex-direction: column; gap: 7px; margin-left: 3px; padding-top: 3px; }
.notice {
  position: absolute;
  left: 1614px;
  top: 4px;
  width: 110px;
  height: 78px;
  box-sizing: border-box;
  background: #5b9be6;
  border-radius: 5px;
  padding: 8px 0 0 12px;
  color: #fff;
  white-space: nowrap;
}
.notice p { margin: 0 0 1px; line-height: 17px; font-size: 12.5px; }
.notice b {
  display: block;
  width: 53px;
  height: 18px;
  margin-top: 6px;
  background: #fff;
  color: #5b9be6;
  font-weight: 400;
  text-align: center;
  line-height: 18px;
  border-radius: 2px;
  font-size: 12.5px;
}

/* combo row */
.combos {
  height: 27px;
  flex: none;
  display: flex;
  gap: 3px;
  padding-top: 4px;
  box-sizing: border-box;
  background: #c9ccd1;
  border-bottom: 1px solid #9a9da1;
}
.combo {
  height: 20px;
  background: #fff;
  display: flex;
  align-items: center;
  padding: 0 6px 0 3px;
  box-sizing: border-box;
  justify-content: space-between;
  white-space: nowrap;
  overflow: hidden;
  flex: none;
}
.combo span { overflow: hidden; }
.combo:first-child { padding-left: 0; }
.combo:first-child span { width: 60px; text-indent: -21px; }

.main { flex: 1; display: flex; min-height: 0; background: #fff; }
.head-bar {
  height: 13px;
  background: #c9ccd1;
  display: flex;
  justify-content: flex-end;
  padding-right: 4px;
  box-sizing: border-box;
  flex: none;
}

/* nav tree */
.nav { width: 182px; flex: none; border-right: 1px solid #aaa; box-sizing: border-box; display: flex; flex-direction: column; border-bottom: 1px solid #aaa; }
.nav-title { height: 21px; line-height: 21px; background: #f0f0f0; color: #888; margin-left: 0; text-indent: -19px; overflow: hidden; border-bottom: 1px solid #c4c4c4; flex: none; }
.nav-tools { height: 31px; background: #f0f0f0; border-bottom: 1px solid #c4c4c4; display: flex; justify-content: flex-end; gap: 5px; padding: 3px 2px 0 0; box-sizing: border-box; flex: none; }
.view-btn {
  width: 21px;
  height: 23px;
  border: 1px solid #7fb2f0;
  border-radius: 4px;
  background: #e8f1fb;
  box-sizing: border-box;
  padding: 2px;
  display: flex;
}
.view-btn svg { width: 100%; }
.nav-tree { flex: 1; position: relative; overflow: hidden; padding-top: 2px; }
.n-row { height: 24px; display: flex; align-items: center; padding-left: 0; margin-left: -4px; white-space: nowrap; color: #333; }
.n-row.sub { margin-left: 13px; width: 140px; padding-left: 3px; gap: 6px; box-sizing: border-box; }
.n-row.sel { background: #c5d7f0; height: 22px; margin-top: 1px; margin-bottom: 1px; }
.n-row em {
  font: 8px "Liberation Serif", serif;
  background: #f7d765;
  color: #c79a20;
  padding: 1px 7px;
  margin-left: 5px;
}
.nav-scroll { position: absolute; left: 170px; top: 16px; width: 8px; height: 663px; border-radius: 4px; background: #c8c8c8; }

/* middle */
.mid { width: 279px; margin-left: 4px; flex: none; display: flex; flex-direction: column; border-left: 1px solid #bbb; border-right: 1px solid #bbb; box-sizing: border-box; }
.mid-top { height: 420px; flex: none; display: flex; flex-direction: column; border-bottom: 1px solid #aaa; box-sizing: border-box; }
.p-tabs { height: 22px; flex: none; display: flex; background: #f0f0f0; border-bottom: 1px solid #c4c4c4; }
.p-tabs span { width: 64px; margin-right: 1px; text-align: center; line-height: 22px; background: #ddd; color: #999; height: 22px; }
.p-tabs .on { background: #f0f0f0; color: #333; font-weight: 500; }
.mid-bottom .p-tabs { height: 21px; }
.mid-bottom .p-tabs span { height: 21px; }
.mid-tools { height: 31px; flex: none; background: #f0f0f0; border-bottom: 1px solid #c4c4c4; display: flex; align-items: center; gap: 10px; padding-left: 5px; position: relative; box-sizing: border-box; color: #444; }
.m-tool { display: flex; align-items: center; gap: 3px; white-space: nowrap; }
.more { position: absolute; right: 5px; font-size: 9px; letter-spacing: -2px; }
.m-search { height: 18px; flex: none; border-bottom: 1px solid #c4c4c4; color: #aaa; line-height: 18px; display: flex; justify-content: space-between; align-items: center; padding: 0 6px 0 2px; }
.m-tree { flex: 1; }
.m-root { height: 24px; margin-top: 2px; display: flex; align-items: center; padding-left: 11px; gap: 7px; }
.tri { width: 0; height: 0; border-left: 5px solid transparent; border-bottom: 5px solid #444; flex: none; }
.m-leaf { height: 24px; padding-left: 40px; display: flex; align-items: center; font-family: "Noto Sans", sans-serif; }
.m-leaf span { padding: 0 4px; line-height: 21px; }
.m-leaf .sel { background: #b8cff0; }

.mid-bottom { flex: 1; display: flex; flex-direction: column; margin-top: 4px; min-height: 0; border-bottom: 1px solid #aaa; position: relative; }
.props { width: 276px; table-layout: fixed; border-collapse: collapse; flex: none; color: #333; }
.props th { height: 20px; background: #f0f0f0; font-weight: 400; border: 1px solid #c9c9c9; padding: 0; }
.props td { height: 20px; border: 1px solid #d4d4d4; padding: 0 3px; white-space: nowrap; overflow: hidden; }
.props .idx { text-align: center; background: #f0f0f0; padding: 0; font-family: "Noto Sans", sans-serif; font-size: 13px; color: #444; }
.props .link { color: #2f6fcf; }
.props .pval.dim { background: #e8e8e8; color: #999; padding-left: 4px; }
.props .fold .pname { background: #f7f7f7; }
.props .fold .pval { background: #e6e6e6; }
.plus {
  display: inline-block;
  width: 11px;
  height: 11px;
  border: 1px solid #777;
  border-radius: 2px;
  font-style: normal;
  line-height: 10px;
  text-align: center;
  margin-right: 6px;
  font-size: 10px;
}
.props-rest { flex: 1; }
.props-rest span { display: block; width: 22px; height: 100%; background: #f0f0f0; }

/* canvas */
.canvas { width: 1138px; margin-left: 5px; flex: none; position: relative; background: #000; overflow: hidden; }
.cad { display: block; }
.lbl { font: 18px "Liberation Sans", sans-serif; fill: #fff; }
.ax { font: 15px "Liberation Sans", sans-serif; }
.tools3d {
  position: absolute;
  left: 1105px;
  top: 2px;
  width: 32px;
  height: 225px;
  background: #9da0a4;
  border-radius: 2px;
  box-sizing: border-box;
  display: flex;
  flex-direction: column;
  align-items: center;
  padding-top: 9px;
}
.tools3d svg { flex: none; display: block; }
.tool-2d { width: 24px; height: 23px; margin: 7px 0 5px; background: #7c8ba5; border: 1px solid #445; box-sizing: border-box; font: 8px/9px "Liberation Sans", sans-serif; text-align: right; padding: 12px 1px 0 0; color: #223; }
.tri3 { width: 0; height: 0; border: 3px solid transparent; border-top: 4px solid #445; margin: 6px 0 0; height: 4px; flex: none; }
.tools3d hr { width: 24px; margin: 1px 0 5px; border: none; border-top: 1px solid #777; }

/* dialog */
.dlg {
  position: absolute;
  left: 87px;
  top: 5px;
  width: 752px;
  height: 728px;
  background: #f0f0f0;
  display: flex;
  flex-direction: column;
  box-sizing: border-box;
}
.dlg-title { height: 27px; background: #2e7bdc; color: #fff; display: flex; align-items: center; padding-left: 8px; flex: none; }
.win { margin-left: auto; display: flex; gap: 19px; padding-right: 9px; }
.dlg-tabs { height: 28px; padding: 5px 0 0 13px; display: flex; flex: none; box-sizing: border-box; gap: 3px; }
.dlg-tabs span { width: 72px; height: 23px; text-align: center; line-height: 25px; background: #dcdcdc; color: #777; margin-top: 0; }
.dlg-tabs .on { background: #fff; color: #3a80d8; border: 1px solid #ccc; border-bottom: none; border-radius: 3px 3px 0 0; box-sizing: border-box; line-height: 24px; }
.pane {
  margin: 0 12px 7px 13px;
  flex: 1;
  min-height: 0;
  background: #fff;
  border-top: 1px solid #bcbcbc;
  border-bottom: 1px solid #c8c8c8;
  display: flex;
  flex-direction: column;
  padding-top: 9px;
  box-sizing: border-box;
  position: relative;
}
.opts { height: 28px; flex: none; display: flex; align-items: center; padding: 0 0 6px 7px; border: 1px solid #ddd; border-bottom: none; border-radius: 4px 4px 0 0; box-sizing: border-box; color: #333; }
.opts label { display: flex; align-items: center; margin-right: 7px; gap: 7px; }
.opts .chk-l { gap: 3px; margin-right: 9px; }
.opts .dis { color: #aaa; }
.radio { width: 11px; height: 11px; border: 1px solid #ccc; border-radius: 50%; box-sizing: border-box; display: inline-block; flex: none; position: relative; background: #fff; }
.radio.on-grey::after, .radio.sel::after { content: ""; position: absolute; inset: 2px; border-radius: 50%; background: #c0c0c0; }
.radio.sel::after { background: #3f8ef5; }
.chk { width: 13px; height: 13px; border: 1px solid #aaa; border-radius: 2px; box-sizing: border-box; display: inline-block; flex: none; position: relative; background: #fff; }
.chk.on { background: #5b9cf5; border-color: #5b9cf5; }
.chk.grey { background: #eee; border-color: #bbb; }
.chk.on::after, .chk.grey::after {
  content: "";
  position: absolute;
  left: 3px;
  top: 1px;
  width: 3px;
  height: 6px;
  border: solid #fff;
  border-width: 0 2px 2px 0;
  transform: rotate(45deg);
}
.chk.grey::after { border-color: #aaa; }
.chk.part { background: #a9cdf8; border-color: #888; box-shadow: inset 0 0 0 1px #fff; }

.qty-wrap { height: 278px; flex: none; position: relative; overflow: hidden; border-bottom: 1px solid #c8c8c8; padding-left: 2px; }
.qty { table-layout: fixed; border-collapse: collapse; width: 982px; font-family: "Liberation Mono", "Noto Sans CJK SC", monospace; font-size: 10px; color: #222; }
.qty th, .qty td { border: 1px solid #000; padding: 0; text-align: center; font-weight: 400; overflow: hidden; white-space: nowrap; font-family: "Noto Sans CJK SC", sans-serif; font-size: 12px; line-height: 13px; }
.qty .h1 th { height: 17px; }
.qty .h2 th { height: 46px; }
.qty th.bold { font-weight: 700; white-space: normal; font-size: 12.5px; padding-bottom: 5px; }
.qty th.wide { padding-bottom: 0; }
.qty th.tight { font-size: 12px; line-height: 12px; padding: 0 5px 5px; }
.qty small { font: 10px/13px "Liberation Mono", monospace; }
.qty tbody td { height: 18px; }
.qty .gut { background: #ececec; border-color: #c8c8c8; border-left: none; text-align: left; font: 11px/13px "Liberation Mono", monospace; color: #555; }
.qty td.lead { font: 10px/13px "Liberation Mono", monospace; }
.qty td.hz { font: 700 12.5px/13px "Noto Sans CJK SC", sans-serif; }
.qty td.plain { font: 12px/13px "Noto Sans CJK SC", sans-serif; }
.qty td.floor { font: 12px/13px "Noto Sans CJK SC", sans-serif; vertical-align: bottom; padding-bottom: 7px; }
.qty td.num { font: 10px/13px "Liberation Mono", monospace; text-align: right; padding-right: 2px; }
.qty .sum td.num { font: 700 11.5px/13px "Liberation Mono", monospace; padding-right: 1px; }
.qty .total td:not(.gut) { background: #e4e4e4; }
.mask { position: absolute; inset: 0; pointer-events: none; }
.mask span { position: absolute; }
.mask-a { left: 71px; top: 64px; width: 56px; height: 74px; background: #fff; }
.mask-b { left: 127px; top: 80px; width: 15px; height: 44px; background: #fff; }
.mask-c { left: 116px; top: 97px; width: 26px; height: 27px; background: #d9d9d9; clip-path: polygon(0 0, 100% 0, 100% 45%, 75% 100%, 0 100%); }
.h-scroll { position: absolute; left: 15px; top: 267px; width: 478px; height: 8px; border-radius: 4px; background: #cbcbcb; }

.detail-head { margin-top: 15px; height: 24px; flex: none; border-top: 1px solid #ccc; line-height: 16px; padding-left: 1px; box-sizing: border-box; color: #333; font-size: 12px; }
.detail { height: 278px; flex: none; overflow: hidden; border-top: 1px solid #888; border-bottom: 1px solid #888; box-sizing: border-box; padding-left: 1px; }
.d-head, .d-row { display: flex; width: 254px; }
.d-head { height: 17px; background: #7fb2f0; color: #fff; font-weight: 700; text-align: center; line-height: 15px; }
.d-g { width: 15px; flex: none; }
.d-head .d-g { background: #fff; }
.d-n { width: 79px; flex: none; box-sizing: border-box; }
.d-p { width: 160px; flex: none; box-sizing: border-box; }
.d-head .d-p { border-left: 1px solid #fff; margin-left: 1px; }
.d-row { height: 30px; line-height: 28px; background: #2f7fe0; color: #13233a; border-bottom: 1px solid #bcd8f8; box-sizing: border-box; font: 12.5px/28px "Noto Sans", sans-serif; }
.d-row .d-g { background: #8cbcf0; color: #fff; font-weight: 700; font-size: 13px; text-align: right; padding-right: 0; border-bottom: none; letter-spacing: -.5px; }
.d-row .d-n { padding-left: 4px; }
.d-row .d-p { padding-left: 4px; border-left: 1px solid #cfe2f8; margin-left: 1px; white-space: nowrap; }
.actions { flex: 1; display: flex; align-items: flex-start; padding: 6px 7px 0 6px; gap: 6px; }
.actions button { width: 140px; height: 26px; background: #fff; border: 1px solid #ccc; border-radius: 3px; font: 12px/22px "Noto Sans CJK SC", sans-serif; color: #333; padding: 0; }
.actions .quit { margin-left: auto; width: 80px; background: #2e7fdb; border-color: #2e7fdb; color: #fff; }
.grip {
  position: absolute;
  right: 2px;
  bottom: 2px;
  width: 8px;
  height: 8px;
  background: radial-gradient(circle, #888 1px, transparent 1.2px) 0 0 / 3px 3px;
}

/* right panel */
.split { width: 4px; flex: none; background: #e6e6e6; position: relative; }
.split span { position: absolute; top: 374px; height: 100px; width: 4px; background: #6c6f74; left: 0; }
.right { flex: 1; min-width: 0; display: flex; flex-direction: column; overflow: hidden; border-left: 1px solid #c0c0c0; box-sizing: border-box; border-bottom: 1px solid #aaa; }
.r-head { height: 13px; background: #ececec; flex: none; }
.r-title { height: 22px; line-height: 21px; flex: none; padding-left: 8px; background: #f0f0f0; color: #888; border-bottom: 1px solid #ccc; box-sizing: border-box; white-space: nowrap; }
.r-tabs { height: 27px; flex: none; display: flex; gap: 4px; padding: 3px 0 0 2px; background: #f4f4f4; box-sizing: border-box; border-bottom: 1px solid #ccc; white-space: nowrap; }
.r-tabs span { width: 76px; flex: none; background: #e8e8e8; color: #666; text-align: center; line-height: 23px; border-radius: 3px 3px 0 0; }
.r-tabs .on { background: #fff; border: 1px solid #ccc; border-bottom: none; box-sizing: border-box; }
.r-cur { height: 30px; flex: none; display: flex; align-items: center; gap: 9px; padding-left: 8px; border-bottom: 1px solid #ccc; box-sizing: border-box; }
.r-cur .radio { width: 13px; height: 13px; }
.r-tree { flex: 1; min-height: 0; overflow: hidden; padding-top: 3px; }
.f-row { height: 24px; display: flex; align-items: center; padding-left: 45px; gap: 7px; white-space: nowrap; color: #333; }
.f-row.top { padding-left: 7px; gap: 11px; }
.f-row.top .chk { margin-left: 1px; }
.f-row.top span { margin-left: -2px; }
.f-row .chk, .r-foot .chk { width: 14px; height: 14px; }
.r-foot { height: 39px; flex: none; border-top: 1px solid #ccc; display: flex; align-items: center; padding-left: 2px; gap: 3px; white-space: nowrap; box-sizing: border-box; }
</style>

<style>
html, body { margin: 0; padding: 0; overflow: hidden; background: #fff; }
</style>
